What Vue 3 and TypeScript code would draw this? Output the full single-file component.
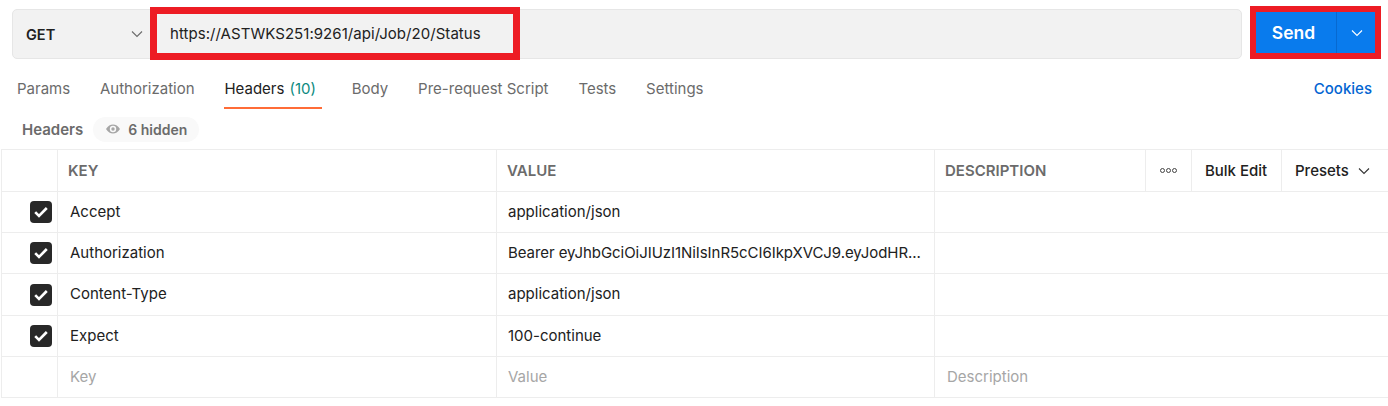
<script setup lang="ts">
const tabs = [
  { label: 'Params' },
  { label: 'Authorization' },
  { label: 'Headers', count: '(10)', active: true },
  { label: 'Body' },
  { label: 'Pre-request Script' },
  { label: 'Tests' },
  { label: 'Settings' },
]
const rows = [
  { key: 'Accept', value: 'application/json' },
  { key: 'Authorization', value: 'Bearer eyJhbGciOiJIUzI1NiIsInR5cCI6IkpXVCJ9.eyJodHR...' },
  { key: 'Content-Type', value: 'application/json' },
  { key: 'Expect', value: '100-continue' },
]
</script>

<template>
  <div class="page">
    <div class="request">
      <div class="bar">
        <div class="method">
          <span>GET</span>
          <svg class="chev" width="12" height="12" viewBox="0 0 12 12"><path d="M1 3.500 6 8.500 11 3.500" /></svg>
        </div>
        <div class="url">https://ASTWKS251:9261/api/Job/20/Status</div>
        <div class="mark mark-url"></div>
      </div>
      <div class="send-wrap">
        <div class="send">
          <span class="send-label">Send</span>
          <span class="send-arrow">
            <svg width="12" height="12" viewBox="0 0 12 12"><path d="M1 3.500 6 8.500 11 3.500" /></svg>
          </span>
        </div>
      </div>
    </div>

    <div class="tabs">
      <div v-for="t in tabs" :key="t.label" class="tab" :class="{ active: t.active }">
        {{ t.label }}<span v-if="t.count" class="count">{{ t.count }}</span>
      </div>
      <div class="cookies">Cookies</div>
    </div>

    <div class="subhead">
      <span class="subtitle">Headers</span>
      <span class="pill">
        <svg width="16" height="16" viewBox="0 0 16 16"><path d="M1 8c2-3.200 4.300-4.600 7-4.600S13 4.800 15 8c-2 3.200-4.300 4.600-7 4.600S3 11.200 1 8Z" fill="#a6a6a6" /><circle cx="8" cy="8" r="3.200" fill="#f9f9f9" /><circle cx="8" cy="8" r="1.700" fill="#a6a6a6" /></svg>
        6 hidden
      </span>
    </div>

    <div class="table">
      <div class="row head">
        <div class="cell"></div>
        <div class="cell pad">KEY</div>
        <div class="cell pad">VALUE</div>
        <div class="cell pad">DESCRIPTION</div>
        <div class="cell dots"><i></i><i></i><i></i></div>
        <div class="cell action">Bulk Edit</div>
        <div class="cell action presets">
          Presets
          <svg class="chev dark" width="12" height="12" viewBox="0 0 12 12"><path d="M1 3.500 6 8.500 11 3.500" /></svg>
        </div>
      </div>
      <div v-for="r in rows" :key="r.key" class="row">
        <div class="cell check">
          <span class="box">
            <svg width="14" height="12" viewBox="0 0 14 12"><path d="M1.200 6.200 5 10 12.800 2" /></svg>
          </span>
        </div>
        <div class="cell text">{{ r.key }}</div>
        <div class="cell text value" :class="{ long: r.value.length > 20 }">{{ r.value }}</div>
        <div class="cell wide"></div>
      </div>
      <div class="row">
        <div class="cell"></div>
        <div class="cell text ph">Key</div>
        <div class="cell text value ph">Value</div>
        <div class="cell text ph wide">Description</div>
      </div>
    </div>
  </div>
</template>

<style>
html, body { margin: 0; background: #fff; }
</style>

<style scoped>
.page {
  width: 1388px;
  height: 406px;
  overflow: hidden;
  background: #fff;
  color: #212121;
  font-family: Inter, "Noto Sans", sans-serif;
  font-size: 15px;
}
.request {
  display: flex;
  height: 60px;
  padding-left: 12px;
  box-sizing: border-box;
}
.bar {
  position: relative;
  display: flex;
  align-items: center;
  box-sizing: border-box;
  width: 1230px;
  height: 50px;
  margin-top: 9px;
  background: #f2f2f2;
  border: 1px solid #e6e6e6;
  border-radius: 5px;
}
.method {
  display: flex;
  align-items: center;
  justify-content: space-between;
  box-sizing: border-box;
  width: 146px;
  padding: 0 16px 0 13px;
  font-size: 14.5px;
  font-weight: 600;
}
.chev path, .send-arrow path {
  fill: none;
  stroke: #6b6b6b;
  stroke-width: 1.1;
}
.chev.dark path { stroke: #333; }
.url {
  margin: -1px 0 0 11px;
  letter-spacing: 0.05px;
}
.mark-url {
  position: absolute;
  left: 137px;
  top: -3px;
  width: 370px;
  height: 53px;
  box-sizing: border-box;
  border: 7px solid #ed1c24;
}
.send-wrap {
  box-sizing: border-box;
  width: 131px;
  height: 53px;
  margin: 6px 0 0 8px;
  border: 6px solid #ed1c24;
}
.send {
  display: flex;
  height: 100%;
  background: #097bed;
  color: #fff;
}
.send-label {
  display: flex;
  align-items: center;
  justify-content: center;
  box-sizing: border-box;
  width: 80px;
  padding-right: 5px;
  font-size: 17.5px;
  font-weight: 600;
}
.send-arrow {
  display: flex;
  align-items: center;
  justify-content: center;
  flex: 1;
  padding-left: 1px;
  border-left: 1px solid #0769d0;
}
.send-arrow path { stroke: #fff; }
.tabs {
  display: flex;
  align-items: flex-start;
  gap: 29.85px;
  height: 57px;
  padding-left: 17px;
  padding-right: 16px;
  box-sizing: border-box;
  color: #6b6b6b;
}
.tab {
  height: 49px;
  padding-top: 20px;
  box-sizing: border-box;
  line-height: 18px;
  white-space: nowrap;
}
.tab.active {
  color: #212121;
  border-bottom: 2px solid #ff6c37;
  padding-right: 6px;
}
.count {
  margin-left: 5px;
  color: #0c8a80;
}
.cookies {
  margin-left: auto;
  padding-top: 20px;
  line-height: 18px;
  color: #0265d2;
  font-weight: 500;
}
.subhead {
  display: flex;
  align-items: center;
  height: 32px;
  margin-top: -4px;
  padding-left: 22px;
  gap: 10px;
  font-weight: 600;
  color: #6b6b6b;
}
.pill {
  display: flex;
  align-items: center;
  gap: 7px;
  height: 25px;
  padding: 0 12px;
  background: #f9f9f9;
  border-radius: 13px;
  font-size: 14px;
}
.table {
  margin-left: 1px;
  margin-top: 4px;
  border-top: 1px solid #ededed;
  border-left: 1px solid #ededed;
}
.row {
  display: grid;
  grid-template-columns: 56px 439px 438px 211px 46px 90px 1fr;
  height: 40px;
  border-bottom: 1px solid #ededed;
  box-sizing: content-box;
}
.row.head {
  height: 41px;
  color: #6b6b6b;
  font-weight: 600;
}
.row:nth-child(4) { height: 41px; }
.cell {
  display: flex;
  align-items: center;
  min-width: 0;
  box-sizing: border-box;
  border-right: 1px solid #ededed;
}
.cell.wide {
  grid-column: 4 / -1;
  border-right: 0;
}
.cell:last-child { border-right: 0; }
.pad { padding-left: 10px; }
.text { padding-left: 12px; padding-bottom: 2px; }
.value { padding-left: 11px; }
.long { letter-spacing: -0.06px; }
.text.ph { color: #a6a6a6; }
.check { justify-content: flex-end; padding-right: 5px; }
.box {
  display: flex;
  align-items: center;
  justify-content: center;
  width: 22px;
  height: 22px;
  background: #282828;
  border-radius: 4px;
}
.box path {
  fill: none;
  stroke: #fff;
  stroke-width: 2.6;
}
.dots {
  justify-content: center;
  gap: 1px;
}
.dots i {
  display: block;
  width: 5px;
  height: 5px;
  box-sizing: border-box;
  border: 1px solid #444;
  border-radius: 50%;
}
.action {
  justify-content: center;
  padding-right: 1px;
  color: #212121;
  font-weight: 500;
}
.presets {
  gap: 9px;
  justify-content: flex-start;
  padding-left: 13px;
}
</style>
